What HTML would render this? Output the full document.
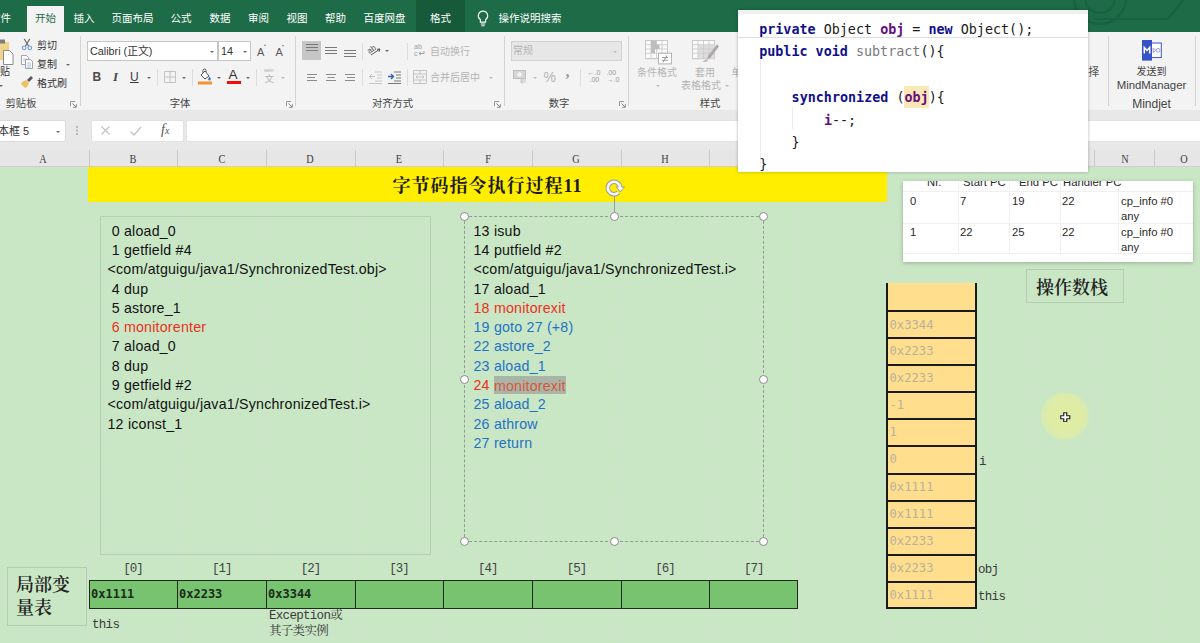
<!DOCTYPE html>
<html lang="zh-CN">
<head>
<meta charset="utf-8">
<title>字节码指令执行过程11</title>
<style>
*{box-sizing:border-box;margin:0;padding:0}
html,body{width:1200px;height:643px;overflow:hidden;background:#c9e7c5}
body{font-family:"Liberation Sans","Noto Sans CJK SC",sans-serif;position:relative}
.abs{position:absolute}
#app{position:absolute;left:0;top:0;width:1200px;height:643px;overflow:hidden;background:#c9e7c5}
/* ---------- title/tab bar ---------- */
#tabs{left:0;top:0;width:1200px;height:32px;background:#1d6b47}
.tab{position:absolute;top:9px;height:18px;line-height:18px;font-size:10.5px;color:#fff;white-space:nowrap;transform:translateX(-50%)}
#tab-active{left:27px;top:6px;width:37px;height:27px;background:#f3f3f3}
#tab-format{left:416px;top:0;width:49px;height:32px;background:#165a3a}
/* ---------- ribbon ---------- */
#ribbon{left:0;top:32px;width:1200px;height:78px;background:#f3f3f3}
#ribbon-gap{left:0;top:110px;width:1200px;height:10px;background:#e8e8e8}
#fbar{left:0;top:120px;width:1200px;height:21px;background:#e8e8e8}
#fbar-gap{left:0;top:141px;width:1200px;height:8px;background:#e8e8e8}
.vsep{position:absolute;top:36px;width:1px;height:70px;background:#d4d4d4}
.ssep{position:absolute;width:1px;height:17px;background:#dcdcdc}
.rt{position:absolute;font-size:10px;line-height:16px;color:#333;white-space:nowrap}
.rt.dim{color:#b4b4b4}
.glabel{position:absolute;top:96px;font-size:10.3px;line-height:16px;color:#444;white-space:nowrap;transform:translateX(-50%)}
.dd{position:absolute;width:0;height:0;margin:.5px 0 0 .5px;border-left:2.500px solid transparent;border-right:2.500px solid transparent;border-top:2.500px solid #6a6a6a}
.dd.dim{border-top-color:#bbb}
.inbox{position:absolute;top:41px;height:20px;background:#fff;border:1px solid #c6c6c6;font-size:10.8px;line-height:18px;color:#333;padding-left:2px;white-space:nowrap}
/* ---------- sheet ---------- */
#colhead{left:0;top:149px;width:1200px;height:18px;background:#e6e6e6;border-bottom:1px solid #cfcfcf}
.ch{position:absolute;top:0;height:18px;line-height:20px;font-family:"Liberation Serif","Noto Serif CJK SC",serif;font-size:12.500px;color:#3c3c3c;transform:translateX(-50%) scaleX(.82)}
.chs{position:absolute;top:1px;width:1px;height:17px;background:#c9c9c9}
#sheet{left:0;top:167px;width:1200px;height:476px;background:#c9e7c5}
.gv{position:absolute;top:0;width:1px;height:476px;background:#d0e0ce}
.gh{position:absolute;left:0;width:1200px;height:1px;background:#cde2ca}
#title{left:88px;top:167px;width:799px;height:35px;background:#ffee00;text-align:center;font-family:"Liberation Serif","Noto Serif CJK SC",serif;font-weight:700;font-size:18px;line-height:35px;color:#1a1a1a;letter-spacing:1px}
#title span{position:absolute;left:304.500px;top:1.500px;white-space:nowrap}
.tb{font-family:"Liberation Sans",sans-serif;font-size:14.2px;letter-spacing:.22px;color:#111;white-space:nowrap}
.tb .ln{height:19.3px;line-height:19.3px}
#tb1{left:100px;top:216px;width:331px;height:339px;border:1px solid #b7cdb5;padding:4.700px 0 0 6.500px}
#tb2{left:464px;top:216px;width:300px;height:326px;border:1px dashed #909d8f;padding:4.700px 0 0 8.500px}
.red{color:#ee301c}
.blue{color:#1f72c4}
.sel{background:#a9b5a6;color:#d9553c;padding:1.500px 0 1px}
.hd{position:absolute;margin:.5px 0 0 .5px;width:9px;height:9px;border-radius:50%;background:#fff;border:1px solid #8a8a8a}
.idx{position:absolute;top:560px;font-family:"Liberation Mono","Noto Serif CJK SC",monospace;font-size:12.500px;letter-spacing:-1px;line-height:18px;color:#444;transform:translateX(-50%)}
#lvt{left:87.500px;top:579.700px;width:712px;height:29px}
.lc{position:absolute;top:0;height:29px;border:1.800px solid #1d2b1b;background:#77c370;font-family:"DejaVu Sans Mono","Liberation Mono",monospace;font-weight:700;font-size:12px;line-height:27.500px;padding-left:1.500px;color:#1b2a1a}
#lvlabel{left:7px;top:567px;width:80px;height:59px;border:1px solid #b5ccb3;font-family:"Noto Serif CJK SC","Liberation Serif",serif;font-size:18px;font-weight:600;line-height:23px;padding:4px 0 0 8px;color:#222}
.note{position:absolute;font-family:"Liberation Mono","Noto Serif CJK SC",monospace;font-size:12.500px;letter-spacing:-.7px;line-height:16px;color:#3a3a3a;white-space:nowrap}
#stack{left:886px;top:282.5px;width:91px;height:328px}
.sc{position:absolute;left:0;width:91px;border:2.500px solid #1a1a1a;border-width:2px 2.500px;background:#ffdf8e;font-family:"DejaVu Sans Mono","Liberation Mono",monospace;font-size:12.200px;color:#b9b19c;padding-left:1.500px}
#oplabel{left:1026px;top:269px;width:98px;height:34px;border:1px solid #b5ccb3;font-family:"Noto Serif CJK SC","Liberation Serif",serif;font-weight:600;font-size:18px;line-height:32px;text-align:center;color:#222;padding-right:6px}
#halo{left:1041px;top:391.500px;width:48px;height:48px;border-radius:50%;background:radial-gradient(circle,rgba(232,238,150,.72) 0,rgba(232,238,152,.7) 50%,rgba(228,238,158,.5) 68%,rgba(215,234,175,.18) 85%,rgba(200,230,198,0) 100%)}
#exc{left:903px;top:181px;width:290px;height:81px;background:#fff;box-shadow:0 1px 4px rgba(0,0,0,.25);overflow:hidden;padding:0}
.et{position:absolute;font-family:"Liberation Sans",sans-serif;font-size:11.300px;line-height:16px;color:#2a2a2a;white-space:nowrap}

#pop{left:738px;top:10px;width:350.400px;height:162px;background:#fff;overflow:hidden;box-shadow:0 0 3px rgba(0,0,0,.3)}
.cl{position:absolute;font-family:"DejaVu Sans Mono","Liberation Mono",monospace;font-size:13.4px;line-height:18px;height:18px;color:#1a1a1a;white-space:pre}
.kw{color:#10108a;font-weight:700}
.fld{color:#660e7a;font-weight:700}
.mth{color:#7a7a7a}
.hl{background:#fbe8b6;padding:4px 0 3px}


</style>
</head>
<body>
<div id="app">
<div id="colhead" class="abs">
<span class="ch" style="left:43.0px">A</span>
<span class="ch" style="left:132.9px">B</span>
<span class="ch" style="left:221.7px">C</span>
<span class="ch" style="left:310.4px">D</span>
<span class="ch" style="left:399.0px">E</span>
<span class="ch" style="left:487.7px">F</span>
<span class="ch" style="left:576.4px">G</span>
<span class="ch" style="left:665.0px">H</span>
<span class="ch" style="left:753.7px">I</span>
<span class="ch" style="left:842.5px">J</span>
<span class="ch" style="left:931.5px">K</span>
<span class="ch" style="left:1005.5px">L</span>
<span class="ch" style="left:1064.8px">M</span>
<span class="ch" style="left:1124.5px">N</span>
<span class="ch" style="left:1184.2px">O</span>
<i class="chs" style="left:89px"></i>
<i class="chs" style="left:177px"></i>
<i class="chs" style="left:266px"></i>
<i class="chs" style="left:355px"></i>
<i class="chs" style="left:443px"></i>
<i class="chs" style="left:532px"></i>
<i class="chs" style="left:621px"></i>
<i class="chs" style="left:709px"></i>
<i class="chs" style="left:798px"></i>
<i class="chs" style="left:887px"></i>
<i class="chs" style="left:976px"></i>
<i class="chs" style="left:1035px"></i>
<i class="chs" style="left:1094px"></i>
<i class="chs" style="left:1154px"></i>
</div>
<div id="sheet" class="abs">
<i class="gv" style="left:89px"></i>
<i class="gv" style="left:177px"></i>
<i class="gv" style="left:266px"></i>
<i class="gv" style="left:355px"></i>
<i class="gv" style="left:443px"></i>
<i class="gv" style="left:532px"></i>
<i class="gv" style="left:621px"></i>
<i class="gv" style="left:709px"></i>
<i class="gv" style="left:798px"></i>
<i class="gv" style="left:887px"></i>
<i class="gv" style="left:976px"></i>
<i class="gv" style="left:1035px"></i>
<i class="gv" style="left:1094px"></i>
<i class="gv" style="left:1154px"></i>
<i class="gh" style="top:17.7px"></i>
<i class="gh" style="top:35.3px"></i>
<i class="gh" style="top:61.7px"></i>
<i class="gh" style="top:88.8px"></i>
<i class="gh" style="top:115.8px"></i>
<i class="gh" style="top:142.9px"></i>
<i class="gh" style="top:169.9px"></i>
<i class="gh" style="top:197.0px"></i>
<i class="gh" style="top:224.0px"></i>
<i class="gh" style="top:251.1px"></i>
<i class="gh" style="top:278.1px"></i>
<i class="gh" style="top:305.2px"></i>
<i class="gh" style="top:332.2px"></i>
<i class="gh" style="top:359.3px"></i>
<i class="gh" style="top:386.3px"></i>
<i class="gh" style="top:413.4px"></i>
<i class="gh" style="top:440.4px"></i>
<i class="gh" style="top:467.4px"></i>
</div>
<div id="title" class="abs"><span>字节码指令执行过程11</span></div>
<div id="tb1" class="abs tb">
<div class="ln">&nbsp;0 aload_0</div>
<div class="ln">&nbsp;1 getfield #4</div>
<div class="ln">&lt;com/atguigu/java1/SynchronizedTest.obj&gt;</div>
<div class="ln">&nbsp;4 dup</div>
<div class="ln">&nbsp;5 astore_1</div>
<div class="ln"><span class="red">&nbsp;6 monitorenter</span></div>
<div class="ln">&nbsp;7 aload_0</div>
<div class="ln">&nbsp;8 dup</div>
<div class="ln">&nbsp;9 getfield #2</div>
<div class="ln">&lt;com/atguigu/java1/SynchronizedTest.i&gt;</div>
<div class="ln">12 iconst_1</div>
</div>
<div id="tb2" class="abs tb">
<div class="ln">13 isub</div>
<div class="ln">14 putfield #2</div>
<div class="ln">&lt;com/atguigu/java1/SynchronizedTest.i&gt;</div>
<div class="ln">17 aload_1</div>
<div class="ln"><span class="red">18 monitorexit</span></div>
<div class="ln"><span class="blue">19 goto 27 (+8)</span></div>
<div class="ln"><span class="blue">22 astore_2</span></div>
<div class="ln"><span class="blue">23 aload_1</span></div>
<div class="ln"><span class="red">24 <span class="sel">monitorexit</span></span></div>
<div class="ln"><span class="blue">25 aload_2</span></div>
<div class="ln"><span class="blue">26 athrow</span></div>
<div class="ln"><span class="blue">27 return</span></div>
</div>
<div id="selframe" class="abs"></div>
<i class="hd" style="left:459px;top:211px"></i>
<i class="hd" style="left:609px;top:211px"></i>
<i class="hd" style="left:758px;top:211px"></i>
<i class="hd" style="left:459px;top:374px"></i>
<i class="hd" style="left:758px;top:374px"></i>
<i class="hd" style="left:459px;top:536px"></i>
<i class="hd" style="left:609px;top:536px"></i>
<i class="hd" style="left:758px;top:536px"></i>
<i class="abs" style="left:614px;top:196px;width:1px;height:16px;background:#9a9a9a"></i>
<svg class="abs" style="left:603px;top:176.500px" width="24" height="22" viewBox="0 0 24 22"><path d="M15.400 15.400A6.200 6.200 0 1 1 17.200 11" fill="none" stroke="#9c9c9c" stroke-width="4.600"/><path d="M13.200 9.800h8.200l-4.100 5.200z" fill="#fff" stroke="#9c9c9c" stroke-width="1"/><path d="M15.400 15.400A6.200 6.200 0 1 1 17.200 11" fill="none" stroke="#f4f4f4" stroke-width="2.600"/></svg>
<span class="idx" style="left:132.9px">[0]</span>
<span class="idx" style="left:221.7px">[1]</span>
<span class="idx" style="left:310.4px">[2]</span>
<span class="idx" style="left:399.0px">[3]</span>
<span class="idx" style="left:487.7px">[4]</span>
<span class="idx" style="left:576.4px">[5]</span>
<span class="idx" style="left:665.0px">[6]</span>
<span class="idx" style="left:753.7px">[7]</span>
<div id="lvt" class="abs">
<div class="lc" style="left:1px;width:90.5px">0x1111</div>
<div class="lc" style="left:89px;width:90.5px">0x2233</div>
<div class="lc" style="left:178px;width:90.5px">0x3344</div>
<div class="lc" style="left:267px;width:90.5px"></div>
<div class="lc" style="left:355px;width:90.4px"></div>
<div class="lc" style="left:444px;width:90.5px"></div>
<div class="lc" style="left:533px;width:90.5px"></div>
<div class="lc" style="left:621px;width:89.8px"></div>
</div>
<div id="lvlabel" class="abs">局部变<br>量表</div>
<span class="note" style="left:92px;top:616.500px">this</span>
<span class="note" style="left:269px;top:607.800px">Exception或</span>
<span class="note" style="left:269px;top:623.800px">其子类实例</span>
<div id="stack" class="abs">
<div class="sc" style="top:0.0px;height:29.0px;line-height:25.5px;border-top:0"></div>
<div class="sc" style="top:27.0px;height:29.5px;line-height:26.0px">0x3344</div>
<div class="sc" style="top:54.5px;height:29.3px;line-height:25.8px">0x2233</div>
<div class="sc" style="top:81.8px;height:29.0px;line-height:25.5px">0x2233</div>
<div class="sc" style="top:108.8px;height:29.0px;line-height:25.5px">-1</div>
<div class="sc" style="top:135.8px;height:29.1px;line-height:25.6px">1</div>
<div class="sc" style="top:162.9px;height:29.2px;line-height:25.7px">0</div>
<div class="sc" style="top:190.1px;height:29.0px;line-height:25.5px">0x1111</div>
<div class="sc" style="top:217.1px;height:29.0px;line-height:25.5px">0x1111</div>
<div class="sc" style="top:244.1px;height:29.2px;line-height:25.7px">0x2233</div>
<div class="sc" style="top:271.3px;height:29.0px;line-height:25.5px">0x2233</div>
<div class="sc" style="top:298.3px;height:28.6px;line-height:25.1px">0x1111</div>
</div>
<span class="note" style="left:979px;top:454px">i</span>
<span class="note" style="left:978px;top:562px">obj</span>
<span class="note" style="left:978px;top:589px">this</span>
<div id="oplabel" class="abs">操作数栈</div>
<div id="halo" class="abs"></div>
<svg class="abs" style="left:1060px;top:411.500px" width="10.500" height="10.500" viewBox="0 0 14 14"><path d="M5 1h4v4h4v4H9v4H5V9H1V5h4z" fill="#fff" stroke="#222" stroke-width="1.6"/></svg>
<div id="exc" class="abs">
<i class="abs" style="left:0;top:10px;width:290px;height:1px;background:#f0f0f0"></i>
<i class="abs" style="left:0;top:42px;width:290px;height:1px;background:#f0f0f0"></i>
<i class="abs" style="left:0;top:72px;width:290px;height:1px;background:#f0f0f0"></i>
<i class="abs" style="left:55px;top:0;width:1px;height:73px;background:#f0f0f0"></i>
<i class="abs" style="left:106px;top:0;width:1px;height:73px;background:#f0f0f0"></i>
<i class="abs" style="left:157px;top:0;width:1px;height:73px;background:#f0f0f0"></i>
<i class="abs" style="left:215px;top:0;width:1px;height:73px;background:#f0f0f0"></i>
<span class="et" style="left:24px;top:-7px">Nr.</span>
<span class="et" style="left:60px;top:-7px">Start PC</span>
<span class="et" style="left:116px;top:-7px">End PC</span>
<span class="et" style="left:160px;top:-7px">Handler PC</span>
<span class="et" style="left:7px;top:12px">0</span>
<span class="et" style="left:57px;top:12px">7</span>
<span class="et" style="left:109px;top:12px">19</span>
<span class="et" style="left:159px;top:12px">22</span>
<span class="et" style="left:218px;top:12px">cp_info #0</span>
<span class="et" style="left:218px;top:27px">any</span>
<span class="et" style="left:7px;top:43px">1</span>
<span class="et" style="left:57px;top:43px">22</span>
<span class="et" style="left:109px;top:43px">25</span>
<span class="et" style="left:159px;top:43px">22</span>
<span class="et" style="left:218px;top:43px">cp_info #0</span>
<span class="et" style="left:218px;top:58px">any</span>
</div>
<div id="tabs" class="abs">
<svg class="abs" style="left:1020px;top:0" width="180" height="32" viewBox="0 0 180 32"><g fill="none" stroke="#175c3d" stroke-width="2.200" opacity=".55"><circle cx="80" cy="-2" r="15"/><circle cx="80" cy="-2" r="26"/><path d="M164 -1L148 19H74"/></g></svg>
<div id="tab-format" class="abs"></div>
<div id="tab-active" class="abs"></div>
<span class="tab" style="left:0.5px">文件</span>
<span class="tab" style="left:45.5px;color:#1e6e46">开始</span>
<span class="tab" style="left:84px">插入</span>
<span class="tab" style="left:132.5px">页面布局</span>
<span class="tab" style="left:181px">公式</span>
<span class="tab" style="left:220px">数据</span>
<span class="tab" style="left:258.5px">审阅</span>
<span class="tab" style="left:297px">视图</span>
<span class="tab" style="left:335.5px">帮助</span>
<span class="tab" style="left:384.5px">百度网盘</span>
<span class="tab" style="left:440.5px">格式</span>
<span class="tab" style="left:530px">操作说明搜索</span>
<svg class="abs" style="left:476px;top:10px" width="14" height="18" viewBox="0 0 14 18"><path d="M7 1.2a4.6 4.6 0 0 0-2.6 8.4v2.6h5.2V9.6A4.6 4.6 0 0 0 7 1.2z" fill="none" stroke="#fff" stroke-width="1.2"/><path d="M4.8 14h4.4M5.4 15.8h3.2" stroke="#fff" stroke-width="1.1"/></svg>
</div>
<div id="ribbon" class="abs"></div><div id="ribbon-gap" class="abs"></div><div id="fbar" class="abs"></div><div id="fbar-gap" class="abs"></div>
<i class="vsep" style="left:80px"></i>
<i class="vsep" style="left:295px"></i>
<i class="vsep" style="left:504px"></i>
<i class="vsep" style="left:628px"></i>
<i class="vsep" style="left:1108px"></i>
<i class="vsep" style="left:1195px"></i>
<svg class="abs" style="left:0;top:38px" width="16" height="30" viewBox="0 0 16 30"><rect x="-4" y="4" width="13" height="18" fill="#f1d48c"/><rect x="-2" y="1.5" width="7" height="4" fill="#7d7d7d"/><path d="M3.5 12.5h6l3.5 3.5v10.5h-9.5z" fill="#fff" stroke="#8a8a8a" stroke-width="1"/></svg>
<span class="rt" style="left:0;top:64px">贴</span>
<i class="dd" style="left:-1.500px;top:84px"></i>
<svg class="abs" style="left:20.500px;top:37.500px" width="12" height="13" viewBox="0 0 15 16"><path d="M4 1l5.500 9M11 1L5.500 10" stroke="#6f6f6f" stroke-width="1.400" fill="none"/><circle cx="4" cy="12.200" r="2.300" fill="none" stroke="#6d9ad6" stroke-width="1.400"/><circle cx="11" cy="12.200" r="2.300" fill="none" stroke="#6d9ad6" stroke-width="1.400"/></svg>
<span class="rt" style="left:37px;top:37.500px">剪切</span>
<svg class="abs" style="left:20px;top:54px" width="14" height="16" viewBox="0 0 14 16"><path d="M1.500 1.500h5l2 2v7h-7z" fill="#fff" stroke="#9a9a9a" stroke-width=".9"/><path d="M3 5h3M3 7h2" stroke="#8fb0de" stroke-width=".7"/><path d="M5.500 5.500h5l2 2v7h-7z" fill="#fff" stroke="#9a9a9a" stroke-width=".9"/><path d="M7 9h4M7 11h4M7 13h4" stroke="#8fb0de" stroke-width=".8"/></svg>
<span class="rt" style="left:37px;top:56.500px">复制</span>
<i class="dd" style="left:65px;top:63px"></i>
<svg class="abs" style="left:20px;top:75px" width="14" height="14" viewBox="0 0 14 14"><path d="M7 5l4-4 2 2-4 4z" fill="#555"/><path d="M2 7l4-2 3 3-2 4-2 1-4-4z" fill="#f0c060"/></svg>
<span class="rt" style="left:37px;top:76px">格式刷</span>
<span class="glabel" style="left:21px">剪贴板</span>
<svg class="abs" style="left:70px;top:100.500px" width="7" height="7" viewBox="0 0 7 7"><path d="M.5 5V.5H5" fill="none" stroke="#9a9a9a" stroke-width="1"/><path d="M2.500 2.500l3.500 3.500M6.300 3.200v3.100H3.200" fill="none" stroke="#8a8a8a" stroke-width="1"/></svg>
<div class="inbox" style="left:87px;width:131px">Calibri (正文)</div>
<div class="inbox" style="left:218px;width:33px">14</div>
<i class="dd" style="left:209px;top:50px"></i><i class="dd" style="left:242px;top:50px"></i>
<span class="rt" style="left:257px;top:43.500px;font-size:11px;color:#5a5a5a">A</span><i class="abs" style="left:263.500px;top:44px;border-left:1.500px solid transparent;border-right:1.500px solid transparent;border-bottom:2px solid #5b8bd0"></i>
<span class="rt" style="left:275.500px;top:43.500px;font-size:11px;color:#5a5a5a">A</span><i class="abs" style="left:281.500px;top:44.500px;border-left:1.500px solid transparent;border-right:1.500px solid transparent;border-top:2px solid #5b8bd0"></i>
<span class="rt" style="left:92.500px;top:69px;font-weight:700;font-size:12px;color:#4a4a4a">B</span>
<span class="rt" style="left:113px;top:69px;font-style:italic;font-weight:700;font-family:'Liberation Serif',serif;font-size:13px;color:#4a4a4a">I</span>
<span class="rt" style="left:130px;top:69px;text-decoration:underline;font-size:12px;font-weight:400;color:#3a3a3a">U</span>
<i class="dd" style="left:146px;top:76px"></i>
<i class="ssep" style="left:157px;top:69px"></i>
<i class="ssep" style="left:192px;top:69px"></i>
<i class="ssep" style="left:256px;top:69px"></i>
<svg class="abs" style="left:163px;top:70px" width="14" height="14" viewBox="0 0 14 14"><path d="M1.5 1.5h11v11h-11zM7 1.5v11M1.5 7h11" fill="none" stroke="#c4c4c4" stroke-width="1"/></svg>
<i class="dd" style="left:181px;top:76px"></i>
<svg class="abs" style="left:197px;top:68px" width="16" height="18" viewBox="0 0 16 18"><path d="M4 7l4-4 4 5-4 3z" fill="#fff" stroke="#555" stroke-width="1"/><path d="M6 5V2.5a1.5 1.5 0 0 1 3 0V4" fill="none" stroke="#555"/><path d="M12.5 8.5c1 1.5 1.3 2 1.3 2.7a1.3 1.3 0 0 1-2.6 0c0-.7.3-1.2 1.3-2.7z" fill="#3a76c4"/><rect x="1" y="13.5" width="14" height="3" fill="#f59331"/></svg>
<i class="dd" style="left:216px;top:76px"></i>
<span class="rt" style="left:228.500px;top:66.500px;font-size:13.500px;font-weight:400;color:#333">A</span><i class="abs" style="left:227px;top:80.500px;width:14px;height:3px;background:#f60a0a"></i>
<i class="dd" style="left:245px;top:76px"></i>
<span class="rt dim" style="left:264px;top:66.500px;font-size:5.500px;line-height:7px;letter-spacing:-.2px">wén</span><span class="rt dim" style="left:264.500px;top:71px;font-size:9.500px">文</span>
<i class="dd dim" style="left:280px;top:76px"></i>
<span class="glabel" style="left:180px">字体</span>
<svg class="abs" style="left:286px;top:100.500px" width="7" height="7" viewBox="0 0 7 7"><path d="M.5 5V.5H5" fill="none" stroke="#9a9a9a" stroke-width="1"/><path d="M2.500 2.500l3.500 3.500M6.300 3.200v3.100H3.200" fill="none" stroke="#8a8a8a" stroke-width="1"/></svg>
<i class="abs" style="left:302px;top:41px;width:19px;height:19px;background:#c6c6c6"></i>
<svg class="abs" style="left:306px;top:44px" width="12" height="9" viewBox="0 0 12 9"><rect x="0" y="0" width="12" height="1" fill="#787878"/><rect x="0" y="3" width="12" height="1" fill="#787878"/><rect x="0" y="6" width="12" height="1" fill="#787878"/></svg>
<svg class="abs" style="left:325px;top:47px" width="12" height="9" viewBox="0 0 12 9"><rect x="0" y="0" width="12" height="1" fill="#787878"/><rect x="0" y="3" width="12" height="1" fill="#787878"/><rect x="0" y="6" width="12" height="1" fill="#787878"/></svg>
<svg class="abs" style="left:344px;top:50px" width="12" height="9" viewBox="0 0 12 9"><rect x="0" y="0" width="12" height="1" fill="#787878"/><rect x="0" y="3" width="12" height="1" fill="#787878"/><rect x="0" y="6" width="12" height="1" fill="#787878"/></svg>
<i class="ssep" style="left:362px;top:43px"></i><i class="ssep" style="left:407px;top:43px"></i><i class="ssep" style="left:362px;top:69px"></i><i class="ssep" style="left:407px;top:69px"></i>
<svg class="abs" style="left:367px;top:43px" width="16" height="14" viewBox="0 0 16 14"><text x="1" y="9" font-size="8" font-family="Liberation Sans, sans-serif" fill="#555" transform="rotate(-35 5 8)">ab</text><path d="M4 12l9-6M13 6l-3 .3M13 6l-1 2.8" stroke="#555" fill="none"/></svg>
<i class="dd" style="left:384px;top:49px"></i>
<svg class="abs" style="left:414px;top:43px" width="12" height="14" viewBox="0 0 12 14"><text x="0" y="6" font-size="7" font-family="Liberation Sans, sans-serif" fill="#9c9c9c">ab</text><text x="0" y="13" font-size="7" font-family="Liberation Sans, sans-serif" fill="#9c9c9c">c</text><path d="M5 10.5h5V8M5 10.5l2-1.500M5 10.500l2 1.500" stroke="#9c9c9c" fill="none" stroke-width=".9"/></svg>
<span class="rt dim" style="left:430px;top:43.700px;font-size:10px">自动换行</span>
<svg class="abs" style="left:307px;top:73.5px" width="10" height="9" viewBox="0 0 10 9"><rect x="0" y="0" width="10" height="1" fill="#8c8c8c"/><rect x="0" y="3" width="8" height="1" fill="#8c8c8c"/><rect x="0" y="6" width="10" height="1" fill="#8c8c8c"/></svg>
<svg class="abs" style="left:325.5px;top:73.5px" width="10" height="9" viewBox="0 0 10 9"><rect x="0.0" y="0" width="10" height="1" fill="#8c8c8c"/><rect x="1.5" y="3" width="7" height="1" fill="#8c8c8c"/><rect x="0.0" y="6" width="10" height="1" fill="#8c8c8c"/></svg>
<svg class="abs" style="left:345px;top:73.5px" width="10" height="9" viewBox="0 0 10 9"><rect x="0" y="0" width="10" height="1" fill="#8c8c8c"/><rect x="2" y="3" width="8" height="1" fill="#8c8c8c"/><rect x="0" y="6" width="10" height="1" fill="#8c8c8c"/></svg>
<svg class="abs" style="left:369px;top:71px" width="13" height="13" viewBox="0 0 13 13"><path d="M6 1h7M8 4h5M8 7h5M6 10h7" stroke="#c8c8c8"/><path d="M6 5.500H0.500M3 3L.5 5.500 3 8" stroke="#c0c0c0" fill="none"/><path d="M0 12.500h13" stroke="#c8c8c8"/></svg>
<svg class="abs" style="left:388px;top:71px" width="13" height="13" viewBox="0 0 13 13"><path d="M6 1h7M8 4h5M8 7h5M6 10h7" stroke="#7a7a7a"/><path d="M0 5.500h5.500M3 3l2.500 2.500L3 8" stroke="#2b64b5" fill="none" stroke-width="1.300"/><path d="M0 12.500h13" stroke="#7a7a7a"/></svg>
<svg class="abs" style="left:413px;top:70px" width="14" height="14" viewBox="0 0 14 14"><path d="M.5.500h13v13H.5zM.5 4h13M.5 10h13M7 .5V4M7 10v3.500" fill="none" stroke="#c4c4c4"/><path d="M3 7h8M3 7l1.500-1.500M3 7l1.500 1.500M11 7L9.500 5.500M11 7L9.500 8.500" stroke="#c4c4c4" fill="none"/></svg>
<span class="rt dim" style="left:430px;top:69.800px;font-size:10px">合并后居中</span>
<i class="dd dim" style="left:488px;top:76px"></i>
<span class="glabel" style="left:392.5px">对齐方式</span>
<svg class="abs" style="left:494px;top:100.500px" width="7" height="7" viewBox="0 0 7 7"><path d="M.5 5V.5H5" fill="none" stroke="#9a9a9a" stroke-width="1"/><path d="M2.500 2.500l3.500 3.500M6.300 3.200v3.100H3.200" fill="none" stroke="#8a8a8a" stroke-width="1"/></svg>
<div class="inbox" style="left:511px;width:111px;background:#e7e7e7;border-color:#d2d2d2;color:#b4b4b4;font-size:10px;padding-left:1px">常规</div>
<i class="dd dim" style="left:612px;top:50px"></i>
<svg class="abs" style="left:513px;top:70px" width="15" height="14" viewBox="0 0 15 14"><rect x=".5" y=".5" width="12" height="8" fill="#d6d6d6" stroke="#bdbdbd"/><circle cx="6.500" cy="4.500" r="2.200" fill="#f3f3f3"/><path d="M7 10h6M7 12h6M9 8v6" stroke="#c8c8c8"/></svg>
<i class="dd dim" style="left:532px;top:76px"></i>
<span class="rt dim" style="left:543.500px;top:69px;font-size:14px">%</span>
<span class="rt" style="left:565.500px;top:64px;font-size:16px;font-weight:700;color:#9a9a9a;font-family:'Liberation Serif',serif">,</span>
<i class="ssep" style="left:580px;top:69px"></i>
<span class="rt" style="left:587.500px;top:70px;font-size:7px;line-height:6.500px;color:#989898">←.0<br>&nbsp;.00</span>
<span class="rt" style="left:606.500px;top:70px;font-size:7px;line-height:6.500px;color:#989898">.00<br>→.0</span>
<span class="glabel" style="left:559px">数字</span>
<svg class="abs" style="left:619px;top:100.500px" width="7" height="7" viewBox="0 0 7 7"><path d="M.5 5V.5H5" fill="none" stroke="#9a9a9a" stroke-width="1"/><path d="M2.500 2.500l3.500 3.500M6.300 3.200v3.100H3.200" fill="none" stroke="#8a8a8a" stroke-width="1"/></svg>
<svg class="abs" style="left:645px;top:40px" width="28" height="25.500" viewBox="0 0 28 24" preserveAspectRatio="none"><path d="M.5.500h22v17H.5z" fill="#fbfbfb" stroke="#c9c9c9"/><path d="M.5 4.500h22M.5 8.500h22M.5 12.500h22M6 .5v17M11.500.5v17M17 .5v17" stroke="#d0d0d0" fill="none"/><path d="M6 .5h5.500v8H6zM11.500 4.500h3v4h-3zM6 8.500h4v4H6z" fill="#bdbdbd"/><rect x="13.500" y="12.500" width="13" height="10" fill="#fff" stroke="#b5b5b5"/><path d="M17 16.500h6M17 19h6M22 14.500l-4 6.500" stroke="#9a9a9a"/></svg>
<span class="rt dim" style="left:637px;top:64.700px;font-size:10px">条件格式</span>
<i class="dd dim" style="left:655px;top:84px"></i>
<svg class="abs" style="left:692px;top:40px" width="28" height="25.500" viewBox="0 0 28 24" preserveAspectRatio="none"><path d="M.5.500h22v17H.5z" fill="#fafafa" stroke="#c9c9c9"/><path d="M6 4.500h16.500v13H6z" fill="#e0dcdc"/><path d="M.5 4.500h22M.5 8.500h22M.5 12.500h22M6 .5v17M11.500.5v17M17 .5v17" stroke="#cdcdcd" fill="none"/><path d="M25 4l2 2-9 11-3 1 1-3z" fill="#a9a9a9"/><path d="M15 18c-2 0-3 2-5 2 2 1 5 1 6-1z" fill="#bdbdbd"/></svg>
<span class="rt dim" style="left:695px;top:64.700px;font-size:10px">套用</span>
<span class="rt dim" style="left:681px;top:77.700px;font-size:10px">表格格式</span>
<i class="dd dim" style="left:724px;top:84px"></i>
<span class="rt dim" style="left:731.500px;top:64.700px;font-size:10px">单</span>
<span class="glabel" style="left:710px">样式</span>
<span class="rt" style="left:1088.300px;top:64px;font-size:11px;color:#555">择</span>
<svg class="abs" style="left:1142px;top:40px" width="21" height="21" viewBox="0 0 21 21"><rect x="9" y="3" width="10.300" height="14.500" fill="#fff" stroke="#4a62cc" stroke-width="1.100"/><rect x="0" y="0" width="10" height="20.600" fill="#3654c8"/><path d="M2.300 13.500V7.500l2.700 3 2.700-3v6" stroke="#fff" fill="none" stroke-width="1.500"/><circle cx="16" cy="10.300" r="1.900" fill="none" stroke="#8a96d8" stroke-width=".9"/><path d="M11.200 8l2.600 2.300-2.600 2.300z" stroke="#8a96d8" fill="none" stroke-width=".9"/></svg>
<span class="rt" style="left:1151.5px;top:64px;font-size:10px;color:#444;transform:translateX(-50%)">发送到</span>
<span class="rt" style="left:1151.5px;top:77px;font-size:11.400px;color:#444;transform:translateX(-50%)">MindManager</span>
<span class="glabel" style="left:1151.500px;font-size:12px;top:95.500px">Mindjet</span>
<div class="abs" style="left:-3px;top:120px;width:68.500px;height:21.500px;background:#fff;border-radius:2px;border:1px solid #dcdcdc"></div>
<span class="rt" style="left:-2px;top:123px;font-size:11px;color:#333">本框 5</span>
<i class="dd" style="left:55px;top:130px"></i>
<span class="abs" style="left:76px;top:126px;width:2px;height:2px;background:#b8b8b8;box-shadow:0 3.500px 0 #b8b8b8,0 7px 0 #b8b8b8"></span>
<div class="abs" style="left:91px;top:120px;width:92.500px;height:21.500px;background:#fff;border-radius:2px;border:1px solid #e2e2e2"></div>
<div class="abs" style="left:186px;top:120px;width:1020px;height:21.500px;background:#fff;border-radius:2px;border:1px solid #e2e2e2"></div>
<svg class="abs" style="left:100px;top:125px" width="12" height="12" viewBox="0 0 12 12"><path d="M1.500 1.500l8 8M9.500 1.500l-8 8" stroke="#c4c4c4" stroke-width="1.200"/></svg>
<svg class="abs" style="left:129px;top:125px" width="14" height="12" viewBox="0 0 14 12"><path d="M1.500 6.500l3.500 3.500 7-8" stroke="#c4c4c4" stroke-width="1.300" fill="none"/></svg>
<span class="rt" style="left:161px;top:122px;font-family:'Liberation Serif',serif;font-style:italic;font-size:14px;color:#555">f<span style="font-size:10px">x</span></span>
<div id="pop" class="abs">
<i class="abs" style="left:0;top:0;width:351px;height:4px;background:#f0f0f0"></i>
<i class="abs" style="left:0;top:27px;width:351px;height:1px;background:#dedede"></i>
<i class="abs" style="left:22px;top:50px;width:1px;height:104px;background:#ededed"></i>
<i class="abs" style="left:54px;top:97px;width:1px;height:22px;background:#ededed"></i>
<div class="cl" style="top:10.5px;left:21.2px"><b class="kw">private</b> Object <b class="fld">obj</b> = <b class="kw">new</b> Object();</div>
<div class="cl" style="top:32.5px;left:21.2px"><b class="kw">public void</b> <span class="mth">subtract</span>(){</div>
<div class="cl" style="top:78.5px;left:53.6px"><b class="kw">synchronized</b> (<b class="fld hl">obj</b>){</div>
<div class="cl" style="top:101.5px;left:85.9px"><b class="fld">i</b>--;</div>
<div class="cl" style="top:123.5px;left:53.6px">}</div>
<div class="cl" style="top:145.5px;left:21.2px">}</div>
</div>
</div>
</body>
</html>
